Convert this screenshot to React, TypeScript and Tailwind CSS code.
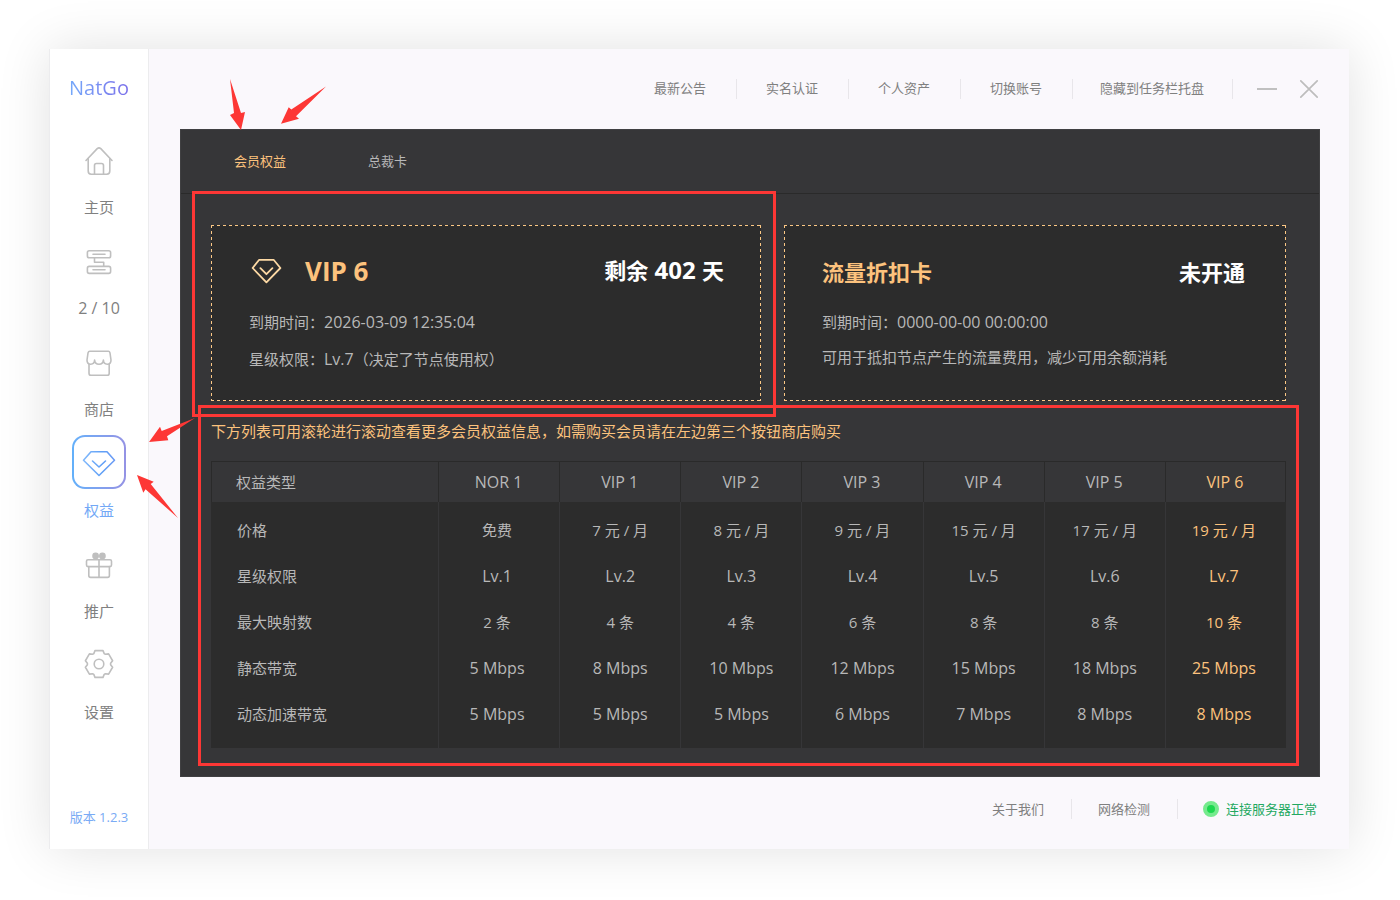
import { useState } from 'react';
import clsx from 'clsx';

const navItems = [
  { id: 'home', label: '主页' },
  { id: 'nodes', label: '2 / 10' },
  { id: 'shop', label: '商店' },
  { id: 'rights', label: '权益' },
  { id: 'promo', label: '推广' },
  { id: 'settings', label: '设置' },
];

const topLinks = [
  { label: '最新公告', width: 'w-28' },
  { label: '实名认证', width: 'w-28' },
  { label: '个人资产', width: 'w-28' },
  { label: '切换账号', width: 'w-28' },
  { label: '隐藏到任务栏托盘', width: 'w-40' },
];

const levels = ['NOR 1', 'VIP 1', 'VIP 2', 'VIP 3', 'VIP 4', 'VIP 5', 'VIP 6'];

const rows = [
  { name: '价格', size: 'text-[15px]', values: ['免费', '7 元 / 月', '8 元 / 月', '9 元 / 月', '15 元 / 月', '17 元 / 月', '19 元 / 月'] },
  { name: '星级权限', size: 'text-base', values: ['Lv.1', 'Lv.2', 'Lv.3', 'Lv.4', 'Lv.5', 'Lv.6', 'Lv.7'] },
  { name: '最大映射数', size: 'text-[15px]', values: ['2 条', '4 条', '4 条', '6 条', '8 条', '8 条', '10 条'] },
  { name: '静态带宽', size: 'text-base', values: ['5 Mbps', '8 Mbps', '10 Mbps', '12 Mbps', '15 Mbps', '18 Mbps', '25 Mbps'] },
  { name: '动态加速带宽', size: 'text-base', values: ['5 Mbps', '5 Mbps', '5 Mbps', '6 Mbps', '7 Mbps', '8 Mbps', '8 Mbps'] },
];

// Six-toothed gear outline around (27, 27)
function gearPoints() {
  const tooth = [[-5.2, -10.4], [-4, -13.4], [4, -13.4], [5.2, -10.4]];
  const points: string[] = [];
  for (let i = 0; i < 6; i++) {
    const a = (i * Math.PI) / 3;
    for (const [x, y] of tooth) {
      const px = 27 + x * Math.cos(a) - y * Math.sin(a);
      const py = 27 + x * Math.sin(a) + y * Math.cos(a);
      points.push(`${px.toFixed(2)},${py.toFixed(2)}`);
    }
  }
  return points.join(' ');
}

function NavIcon({ id }: { id: string }) {
  return (
    <svg
      viewBox="0 0 54 54"
      className="w-[54px] h-[54px]"
      fill="none"
      stroke={id === 'rights' ? 'url(#brand)' : '#bfbfbf'}
      strokeWidth="1.6"
      strokeLinecap="round"
      strokeLinejoin="round"
      aria-hidden="true"
    >
      {id === 'home' && (
        <>
          <path d="M14 28.5 25.2 16.6Q27 15 28.8 16.6L40 28.5" />
          <path d="M16.2 26.5V39Q16.2 42.2 19.2 42.2H34.8Q37.8 42.2 37.8 39V26.5" />
          <path d="M22.5 42V33.4Q22.5 31.5 24.4 31.5H29.6Q31.5 31.5 31.5 33.4V42" />
        </>
      )}
      {id === 'nodes' && (
        <>
          <rect x="15.4" y="17.8" width="23.2" height="7" rx="1.8" />
          <rect x="15.4" y="33.4" width="23.2" height="7" rx="1.8" />
          <path d="M21 21.2H33M21 36.8H33M22.5 25V29.2H31.7V33.2" />
        </>
      )}
      {id === 'shop' && (
        <>
          <path d="M17.8 17.3H36.4Q37.6 17.3 38 19L39 26Q39 30.2 35.4 30.2 31.4 30 31.4 26 31.2 30.2 27 30.2 22.8 30.2 22.6 26 22.6 30 18.6 30.2 15 30.2 15 26L16 19Q16.4 17.3 17.8 17.3Z" />
          <path d="M17 30.5V39.2Q17 41.3 19 41.3H35.2Q37.2 41.3 37.2 39.2V30.5" />
        </>
      )}
      {id === 'rights' && <path d="M19 16.8H35L42.5 25.3 27 40.5 11.5 25.3ZM20.5 26 27 32 33.5 26" />}
      {id === 'promo' && (
        <>
          <circle cx="23.6" cy="20" r="2.6" fill="#bfbfbf" />
          <circle cx="30.4" cy="20" r="2.6" fill="#bfbfbf" />
          <rect x="14.5" y="23.8" width="25" height="6.8" rx="1.5" />
          <path d="M16.8 30.6V39.5Q16.8 41.4 18.6 41.4H35.6Q37.4 41.4 37.4 39.5V30.6M27 23.8V41.4" />
        </>
      )}
      {id === 'settings' && (
        <>
          <polygon points={gearPoints()} />
          <circle cx="27" cy="27" r="4.8" />
        </>
      )}
    </svg>
  );
}

function Sidebar() {
  const [active, setActive] = useState('rights');

  return (
    <aside className="w-[100px] shrink-0 flex flex-col items-center bg-white border-x border-[#ececee]">
      <svg width="0" height="0" className="absolute" aria-hidden="true">
        <linearGradient id="brand" x1="0" x2="1" y1="0" y2="0">
          <stop offset="0" stopColor="#82b9fb" />
          <stop offset="0.6" stopColor="#5f9ff6" />
          <stop offset="1" stopColor="#6d9cf5" />
        </linearGradient>
      </svg>
      <div className="h-[83px] pt-[25px]">
        <span className="text-xl leading-7 bg-gradient-to-r from-[#74a9fa] to-[#7b70ea] bg-clip-text text-transparent">NatGo</span>
      </div>
      <nav className="flex flex-col items-center gap-[15px]">
        {navItems.map((item) => (
          <button
            key={item.id}
            type="button"
            onClick={() => setActive(item.id)}
            className={clsx(
              'flex flex-col items-center gap-2.5',
              item.id === 'nodes' ? 'text-base leading-[22px]' : 'text-[15px] leading-[22px]',
              active === item.id ? 'text-[#72a8f6]' : 'text-[#808080]'
            )}
          >
            <span className={clsx('rounded-[13px]', active === item.id && 'bg-gradient-to-r from-[#62b0fa] to-[#9492e4]')}>
              <span className={clsx('block rounded-[13px] bg-white bg-clip-padding', active === item.id && 'border-2 border-transparent [&>svg]:-m-0.5')}>
                <NavIcon id={item.id} />
              </span>
            </span>
            {item.label}
          </button>
        ))}
      </nav>
      <div className="mt-auto pb-[22px] text-[13px] leading-5 text-[#7aabf5]">版本 1.2.3</div>
    </aside>
  );
}

function TopBar() {
  return (
    <header className="h-20 shrink-0 flex items-center justify-end pr-[30px] text-[13px] text-[#808080]">
      {topLinks.map((link) => (
        <a key={link.label} href="#" className={clsx('h-5 pr-px leading-[18px] text-center border-r border-[#e8e6ea]', link.width)}>
          {link.label}
        </a>
      ))}
      <button type="button" aria-label="最小化" className="ml-6">
        <svg viewBox="0 0 20 20" className="w-5 h-5" stroke="#c0c0c0" strokeWidth="2" strokeLinecap="round">
          <path d="M0.5 10H20" />
        </svg>
      </button>
      <button type="button" aria-label="关闭" className="ml-[22px]">
        <svg viewBox="0 0 20 20" className="w-5 h-5" stroke="#bdbdbd" strokeWidth="1.7" strokeLinecap="round">
          <path d="M1.8 1.8 18.2 18.2M18.2 1.8 1.8 18.2" />
        </svg>
      </button>
    </header>
  );
}

function DashedFrame() {
  return (
    <svg className="absolute inset-0 w-full h-full" fill="none" stroke="#fcc885" aria-hidden="true">
      <line x1="0" y1="0" x2="100%" y2="0" strokeWidth="2" strokeDasharray="3 3" />
      <line x1="0" y1="100%" x2="100%" y2="100%" strokeWidth="2" strokeDasharray="3 3" />
      <line x1="0" y1="0" x2="0" y2="100%" strokeWidth="2" strokeDasharray="3 3" />
      <line x1="100%" y1="0" x2="100%" y2="100%" strokeWidth="2" strokeDasharray="3 3" />
    </svg>
  );
}

function Cards() {
  return (
    <div className="grid grid-cols-[550fr_502fr] gap-[23px]">
      <section className="relative h-44 bg-[#2c2c2c] pl-[38px] pr-[37px] pt-7">
        <DashedFrame />
        <div className="flex items-center h-9">
          <svg viewBox="0 0 36 30" className="w-9 h-[30px]" fill="none" stroke="#fdd9a4" strokeWidth="1.8" strokeLinecap="round" strokeLinejoin="round" aria-hidden="true">
            <path d="M10.2 3.8H24.6L31.4 12 17.4 26.4 3.6 12ZM11.4 12.2 17.4 18.2 23.4 12.2" />
          </svg>
          <h2 className="ml-5 text-[26px] leading-9 font-bold text-[#fcc27d]">VIP 6</h2>
          <p className="ml-auto pb-0.5 text-[22px] leading-9 font-bold text-white">
            剩余<span className="text-2xl leading-9"> 402 </span>天
          </p>
        </div>
        <p className="mt-[21px] text-[15px] leading-6 text-[#b8b8b8]">
          到期时间：<span className="text-base leading-6">2026-03-09 12:35:04</span>
        </p>
        <p className="mt-[13px] text-[15px] leading-6 text-[#b8b8b8]">
          星级权限：<span className="text-base leading-6">Lv.7</span>（决定了节点使用权）
        </p>
        <div className="absolute -left-[19px] -right-[15px] -top-[34px] -bottom-4 border-3 border-[#fd3735] pointer-events-none" />
      </section>
      <section className="relative h-44 bg-[#2c2c2c] pl-[38px] pr-[41px] pt-[29px]">
        <DashedFrame />
        <div className="flex items-center justify-between text-[22px] leading-9 font-bold">
          <h2 className="text-[#fcc27d]">流量折扣卡</h2>
          <p className="text-white">未开通</p>
        </div>
        <p className="mt-5 text-[15px] leading-6 text-[#b8b8b8]">
          到期时间：<span className="text-base leading-6">0000-00-00 00:00:00</span>
        </p>
        <p className="mt-[11px] text-[15px] leading-6 text-[#b8b8b8]">可用于抵扣节点产生的流量费用，减少可用余额消耗</p>
      </section>
    </div>
  );
}

function RightsTable() {
  return (
    <section className="relative mt-[18px]">
      <p className="text-[15px] leading-6 text-[#fcc27d]">下方列表可用滚轮进行滚动查看更多会员权益信息，如需购买会员请在左边第三个按钮商店购买</p>
      <table className="mt-[18px] w-full table-fixed border-separate border-spacing-0 text-[#b8b8b8]">
        <colgroup>
          <col className="w-[227px]" />
          {levels.map((level) => (
            <col key={level} />
          ))}
        </colgroup>
        <thead>
          <tr className="h-[41px]">
            <th scope="col" className="border-t border-l border-[#2a2a2a] pl-6 text-left text-[15px] font-normal">权益类型</th>
            {levels.map((level) => (
              <th key={level} scope="col" className="border-t border-l border-[#2a2a2a] pr-px text-base leading-6 font-normal last:border-r last:text-[#fcc27d]">
                {level}
              </th>
            ))}
          </tr>
        </thead>
        <tbody className="bg-[#2c2c2c]">
          {rows.map((row) => (
            <tr key={row.name} className="h-[46px] first:h-[51px] last:h-[57px] first:[&>*]:pt-[5px] last:[&>*]:pb-[11px]">
              <th scope="row" className="pl-[26px] text-left text-[15px] leading-6 font-normal">{row.name}</th>
              {row.values.map((value, i) => (
                <td
                  key={levels[i]}
                  className={clsx('border-l border-[#363638] text-center leading-6 nth-2:pr-1 last:pr-1 last:text-[#fcc27d]', row.size)}
                >
                  {value}
                </td>
              ))}
            </tr>
          ))}
        </tbody>
      </table>
      <div className="absolute -left-[13px] -right-[13px] -top-[14px] -bottom-[18px] border-3 border-[#fd3735] pointer-events-none" />
    </section>
  );
}

function Footer() {
  return (
    <footer className="h-[72px] shrink-0 flex items-center justify-end pr-8 pb-2 text-[13px] leading-5 text-[#808080]">
      <a href="#" className="w-[106px] pr-px text-center border-r border-[#e8e6ea]">关于我们</a>
      <a href="#" className="w-[106px] pr-px text-center border-r border-[#e8e6ea]">网络检测</a>
      <span className="ml-[25px] w-4 h-4 rounded-full border-4 border-[#75ea8d] bg-[#1dd84f]" />
      <span className="ml-[7px] text-[#22a860]">连接服务器正常</span>
    </footer>
  );
}

function Arrows() {
  return (
    <svg viewBox="-1 0 300 500" className="absolute left-0 top-0 w-[300px] h-[500px] pointer-events-none" fill="#fd3735" aria-hidden="true">
      <polygon points="180,30 191,64 195,63 191,81 180,66 184,64" />
      <polygon points="276,37.5 246,67.3 249,69.7 231,74.7 238.7,58.3 241.3,60.5" />
      <polygon points="145,369 117,387.3 118.3,391.3 99,393 110,377.7 111.7,382" />
      <polygon points="87,426 103.7,432.7 100.7,435 128,469 95.5,440.3 93.3,443.7" />
    </svg>
  );
}

export default function App() {
  return (
    <div className="min-h-screen flex bg-white pt-[49px] pb-[51px] pl-[49px] pr-[51px] font-['Open_Sans','Noto_Sans_CJK_SC',sans-serif]">
      <div className="relative flex-1 flex bg-[#faf8fc] shadow-[0_0_50px_rgba(0,0,0,0.12)]">
        <Sidebar />
        <div className="flex-1 min-w-0 flex flex-col">
          <TopBar />
          <main className="flex-1 ml-[31px] mr-[29px] bg-[#363638] border border-[#404042]">
            <div className="h-16 flex items-center gap-[82px] pl-[53px] pb-0.5 border-b border-[#2a2a2a] text-[13px] leading-5" role="tablist">
              <button type="button" role="tab" aria-selected="true" className="text-[#fcc27d]">会员权益</button>
              <button type="button" role="tab" aria-selected="false" className="text-[#b8b8b8]">总裁卡</button>
            </div>
            <div className="pt-[31px] pl-[30px] pr-[33px]">
              <Cards />
              <RightsTable />
            </div>
          </main>
          <Footer />
        </div>
        <Arrows />
      </div>
    </div>
  );
}
